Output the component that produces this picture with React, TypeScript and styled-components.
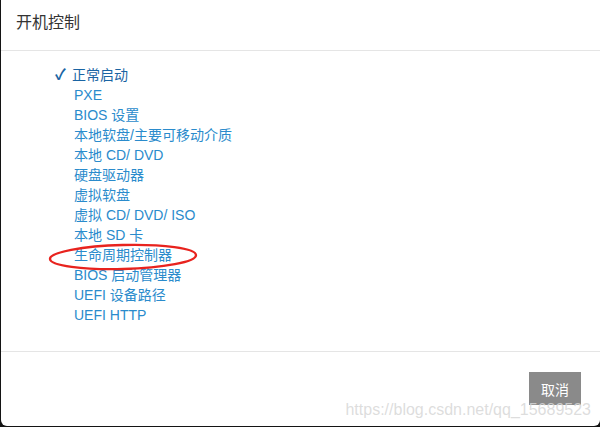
import styled, { createGlobalStyle } from "styled-components";

const GlobalStyle = createGlobalStyle`
  html, body {
    margin: 0;
    padding: 0;
    background: #141414;
  }
  body {
    font-family: "Liberation Sans", "Noto Sans CJK SC", sans-serif;
  }
`

const Modal = styled.div`
  position: relative;
  margin-left: 1px;
  width: 599px;
  height: 426px;
  background: #fff;
  border-radius: 0 0 6px 6px;
  display: flex;
  flex-direction: column;
  overflow: hidden;
`

const Header = styled.div`
  height: 51px;
  box-sizing: border-box;
  padding: 13px 15px 0;
  border-bottom: 1px solid #e5e5e5;
  font-size: 16px;
  line-height: 20px;
  color: #333;
`

const Body = styled.div`
  position: relative;
  height: 301px;
  box-sizing: border-box;
  padding: 14px 0 0 73px;
  border-bottom: 1px solid #e5e5e5;
`

const List = styled.ul`
  list-style: none;
  margin: 0;
  padding: 0;
`

const Item = styled.li<{ $active?: boolean }>`
  position: relative;
  font-size: 14px;
  line-height: 20px;
  color: ${p => (p.$active ? "#1a64a3" : "#2a8bcc")};
  margin-left: ${p => (p.$active ? "-2px" : "0")};
`

const Check = styled.span`
  position: absolute;
  left: -17px;
  top: 0;
  font-size: 15px;
  font-weight: bold;
  color: #1a64a3;
`

const Mark = styled.svg`
  position: absolute;
  left: 47px;
  top: 192px;
  width: 152px;
  height: 30px;
  overflow: visible;
`

const Footer = styled.div`
  flex: 1;
  display: flex;
  justify-content: flex-end;
  align-items: flex-start;
  padding: 20px 19px 0 0;
`

const Button = styled.button`
  width: 52px;
  height: 33px;
  border: none;
  background: #8a8a8a;
  color: #fff;
  font-size: 14px;
  font-family: "Liberation Sans", "Noto Sans CJK SC", sans-serif;
  padding: 0;
`

const Watermark = styled.div`
  position: absolute;
  right: 9px;
  bottom: 7px;
  font-size: 16px;
  color: rgba(215, 215, 215, 0.85);
  pointer-events: none;
`

const items = [
  "PXE",
  "BIOS 设置",
  "本地软盘/主要可移动介质",
  "本地 CD/ DVD",
  "硬盘驱动器",
  "虚拟软盘",
  "虚拟 CD/ DVD/ ISO",
  "本地 SD 卡",
  "生命周期控制器",
  "BIOS 启动管理器",
  "UEFI 设备路径",
  "UEFI HTTP",
]

export default function App() {
  return (
    <>
      <GlobalStyle />
      <Modal>
        <Header>开机控制</Header>
        <Body>
          <List>
            <Item $active>
              <Check>✓</Check>正常启动
            </Item>
            {items.map(label => (
              <Item key={label}>{label}</Item>
            ))}
          </List>
          <Mark viewBox="0 0 152 30">
            <ellipse
              cx="75"
              cy="14"
              rx="73"
              ry="12"
              fill="none"
              stroke="#e8231e"
              strokeWidth="2.4"
              transform="rotate(-1.5 75 14)"
            />
          </Mark>
        </Body>
        <Footer>
          <Button>取消</Button>
        </Footer>
        <Watermark>https://blog.csdn.net/qq_15689523</Watermark>
      </Modal>
    </>
  )
}
